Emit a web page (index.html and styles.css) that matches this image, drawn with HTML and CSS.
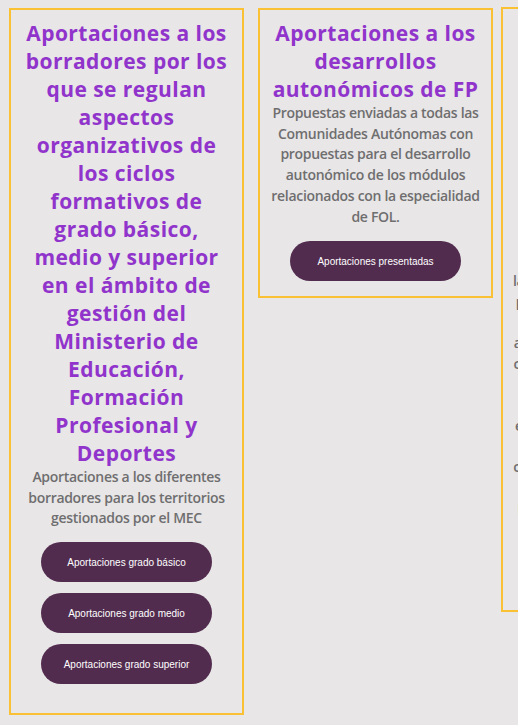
FILE: index.html
```html
<!DOCTYPE html>
<html lang="es">
<head>
<meta charset="utf-8">
<title>Aportaciones</title>
<link rel="stylesheet" href="styles.css">
</head>
<body>
<div class="row">
  <section class="card card-one">
    <h2 class="card-title">Aportaciones a los borradores por los que se regulan aspectos organizativos de los ciclos formativos de grado básico, medio y superior en el ámbito de gestión del Ministerio de Educación, Formación Profesional y Deportes</h2>
    <p class="card-text">Aportaciones a los diferentes borradores para los territorios gestionados por el MEC</p>
    <div class="buttons">
      <a class="btn" href="#">Aportaciones grado básico</a>
      <a class="btn" href="#">Aportaciones grado medio</a>
      <a class="btn" href="#">Aportaciones grado superior</a>
    </div>
  </section>
  <section class="card card-two">
    <h2 class="card-title">Aportaciones a los desarrollos autonómicos de FP</h2>
    <p class="card-text">Propuestas enviadas a todas las Comunidades Autónomas con propuestas para el desarrollo autonómico de los módulos relacionados con la especialidad de FOL.</p>
    <div class="buttons">
      <a class="btn" href="#">Aportaciones presentadas</a>
    </div>
  </section>
  <section class="card card-three">
    <h2 class="card-title nowrap">Aportaciones a los<br>borradores para el<br>decreto de<br>ordenación del<br>nuevo sistema de<br>Formación<br>Profesional y de<br>sus módulos<br>profesionales</h2>
    <p class="card-text nowrap">la enseñanza de los módulos de la<br>profesionales de la especialidad<br>de FOL<br>aportadas por el profesorado en<br>cada una de las reuniones con la<br>Administración<br>educativa<br>en relación con la normativa del<br>nuevo sistema<br>con los cambios en la evaluación<br>y en la acreditación<br>las competencias profesionales</p>
    <div class="buttons">
      <a class="btn" href="#">Aportaciones presentadas</a>
    </div>
  </section>
</div>
</body>
</html>
```

FILE: styles.css
```css
html, body {
  margin: 0;
  padding: 0;
  background: #e8e6e7;
}

body {
  width: 518px;
  height: 725px;
  overflow: hidden;
  font-family: "Open Sans", "Liberation Sans", sans-serif;
}

.row {
  display: flex;
  align-items: flex-start;
  padding: 8px 0 0 9px;
  width: 900px;
}

.card {
  box-sizing: border-box;
  width: 235px;
  min-width: 0;
  flex: 0 0 235px;
  border: 2px solid #fbc134;
  padding: 9px 10px 0;
  text-align: center;
}

.card-one {
  padding-bottom: 29px;
}

.card-two {
  margin-left: 14px;
  padding-bottom: 15px;
}

.card-two .buttons {
  margin-top: 14px;
}

.card-three {
  margin-left: 8px;
  margin-top: -1px;
  padding-top: 10px;
  padding-bottom: 38px;
}

.nowrap {
  white-space: nowrap;
}

.card-title {
  margin: 0;
  font-size: 21px;
  line-height: 28px;
  font-weight: 700;
  letter-spacing: 0.45px;
  color: #9034cb;
}

.card-text {
  margin: 0;
  font-size: 14px;
  line-height: 20.7px;
  font-weight: 600;
  letter-spacing: -0.3px;
  color: #6f6e6f;
}

.buttons {
  display: flex;
  flex-direction: column;
  align-items: center;
  gap: 11px;
  margin-top: 13px;
}

.btn {
  display: flex;
  align-items: center;
  justify-content: center;
  width: 171px;
  height: 40px;
  border-radius: 20px;
  background: #522c4f;
  color: #ffffff;
  text-decoration: none;
  font-family: "Liberation Sans", Arial, sans-serif;
  font-size: 10px;
}
```
